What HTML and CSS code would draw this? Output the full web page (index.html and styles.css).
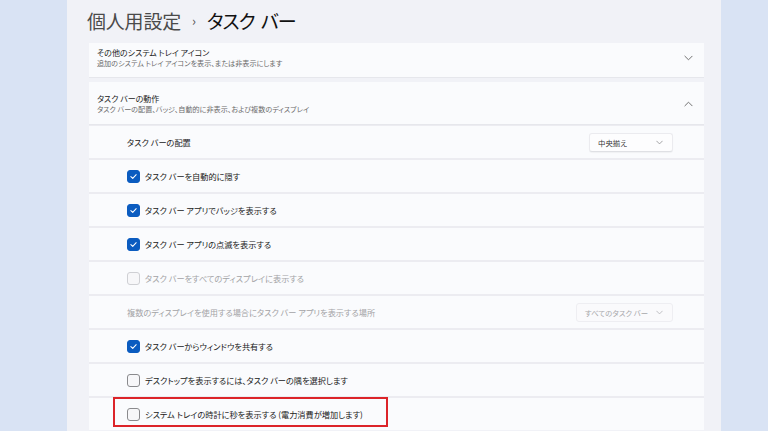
FILE: index.html
```html
<!DOCTYPE html>
<html lang="ja">
<head>
<meta charset="utf-8">
<title>タスク バー</title>
<link rel="stylesheet" href="styles.css">
</head>
<body>
<div class="screen">
  <div class="gutter left"></div>
  <main class="panel">
    <h1 class="title"><span class="crumb">個人用設定</span><span class="sep">›</span><span class="current">タスク バー</span></h1>

    <section class="card">
      <div class="card-head short">
        <div class="head-text">
          <div class="head-title">その他のシステム トレイ アイコン</div>
          <div class="head-sub">追加のシステム トレイ アイコンを表示、または非表示にします</div>
        </div>
        <svg class="chev" viewBox="0 0 10 6" width="9" height="6"><polyline points="1,1 5,5 9,1"/></svg>
      </div>
    </section>

    <section class="card open">
      <div class="card-head tall">
        <div class="head-text">
          <div class="head-title">タスク バーの動作</div>
          <div class="head-sub">タスク バーの配置、バッジ、自動的に非表示、および複数のディスプレイ</div>
        </div>
        <svg class="chev" viewBox="0 0 10 6" width="9" height="6"><polyline points="1,5 5,1 9,5"/></svg>
      </div>
      <div class="rows">
        <div class="row">
          <span class="label">タスク バーの配置</span>
          <div class="select"><span>中央揃え</span><svg class="chev small" viewBox="0 0 10 6" width="7" height="5"><polyline points="1,1 5,5 9,1"/></svg></div>
        </div>
        <div class="row">
          <span class="box checked"><svg viewBox="0 0 12 12" width="9" height="9"><polyline points="2.5,6.2 5,8.6 9.6,3.6"/></svg></span>
          <span class="label">タスク バーを自動的に隠す</span>
        </div>
        <div class="row">
          <span class="box checked"><svg viewBox="0 0 12 12" width="9" height="9"><polyline points="2.5,6.2 5,8.6 9.6,3.6"/></svg></span>
          <span class="label">タスク バー アプリでバッジを表示する</span>
        </div>
        <div class="row">
          <span class="box checked"><svg viewBox="0 0 12 12" width="9" height="9"><polyline points="2.5,6.2 5,8.6 9.6,3.6"/></svg></span>
          <span class="label">タスク バー アプリの点滅を表示する</span>
        </div>
        <div class="row">
          <span class="box disabled"></span>
          <span class="label disabled">タスク バーをすべてのディスプレイに表示する</span>
        </div>
        <div class="row">
          <span class="label disabled">複数のディスプレイを使用する場合にタスク バー アプリを表示する場所</span>
          <div class="select disabled wide"><span>すべてのタスク バー</span><svg class="chev small" viewBox="0 0 10 6" width="7" height="5"><polyline points="1,1 5,5 9,1"/></svg></div>
        </div>
        <div class="row">
          <span class="box checked"><svg viewBox="0 0 12 12" width="9" height="9"><polyline points="2.5,6.2 5,8.6 9.6,3.6"/></svg></span>
          <span class="label">タスク バーからウィンドウを共有する</span>
        </div>
        <div class="row">
          <span class="box"></span>
          <span class="label">デスクトップを表示するには、タスク バーの隅を選択します</span>
        </div>
        <div class="row marked">
          <span class="box"></span>
          <span class="label">システム トレイの時計に秒を表示する (電力消費が増加します)</span>
          <span class="highlight"></span>
        </div>
      </div>
    </section>
  </main>
  <div class="gutter right"></div>
</div>
</body>
</html>
```

FILE: styles.css
```css
html, body {
  margin: 0;
  padding: 0;
}
body {
  width: 768px;
  height: 431px;
  overflow: hidden;
  background: #d9e3f4;
  font-family: "Noto Sans CJK JP", "Noto Sans", sans-serif;
  font-feature-settings: "palt";
  color: #1f1f1f;
}
.screen {
  display: flex;
  height: 431px;
}
.gutter.left {
  width: 67px;
  flex: none;
}
.gutter.right {
  flex: 1;
}
.panel {
  width: 654px;
  flex: none;
  background: #f1f2f7;
  padding: 0 17px 0 22px;
  box-sizing: border-box;
  overflow: hidden;
}
.title {
  margin: 0 0 0 -2px;
  height: 43px;
  display: flex;
  align-items: center;
  gap: 9px;
  font-size: 19px;
  font-weight: 400;
  padding-bottom: 2px;
  box-sizing: border-box;
}
.title .crumb {
  color: #4a4a4a;
  letter-spacing: -0.2px;
}
.title .sep {
  font-size: 13px;
  color: #555;
  margin: 0 2px;
}
.title .current {
  color: #111;
  letter-spacing: -1px;
  word-spacing: 3px;
}
.card {
  background: #ececf1;
}
.card + .card {
  margin-top: 4px;
}
.card-head {
  background: #fafbfd;
  display: flex;
  align-items: center;
  justify-content: space-between;
  padding: 0 11px 0 8px;
  box-sizing: border-box;
  border-bottom: 1px solid #e6e7ec;
}
.card-head.short {
  height: 35px;
  padding-bottom: 5px;
}
.card-head.tall {
  height: 43px;
  padding-top: 1px;
}
.head-text {
  display: flex;
  flex-direction: column;
  gap: 0;
}
.head-title {
  font-size: 8px;
  line-height: 11px;
  color: #222;
}
.head-sub {
  font-size: 7.1px;
  line-height: 10px;
  color: #6a6a6a;
}
.chev {
  fill: none;
  stroke: #707070;
  stroke-width: 1.1;
  stroke-linecap: round;
  stroke-linejoin: round;
}
.rows {
  display: flex;
  flex-direction: column;
  gap: 2px;
  padding-top: 1px;
}
.row {
  position: relative;
  height: 32px;
  background: #fafbfd;
  display: flex;
  align-items: center;
  padding: 0 31px 0 38px;
  box-sizing: border-box;
}
.label {
  font-size: 8.2px;
  color: #202020;
  flex: 1;
  white-space: nowrap;
}
.label.disabled {
  color: #a3a3a6;
}
.box {
  width: 13px;
  height: 13px;
  flex: none;
  box-sizing: border-box;
  border: 1px solid #8a8a8d;
  border-radius: 3px;
  background: #f7f7f9;
  margin-right: 5px;
  display: flex;
  align-items: center;
  justify-content: center;
}
.box.checked {
  background: #0b5cc0;
  border-color: #0b5cc0;
}
.box.checked svg {
  fill: none;
  stroke: #fff;
  stroke-width: 1.4;
  stroke-linecap: round;
  stroke-linejoin: round;
}
.box.disabled {
  border-color: #cfd0d4;
  background: #f7f7f9;
}
.select {
  width: 84px;
  height: 19px;
  box-sizing: border-box;
  background: #fdfdfe;
  border: 1px solid #ebebef;
  border-bottom-color: #dfe0e4;
  border-radius: 3px;
  display: flex;
  align-items: center;
  justify-content: space-between;
  padding: 0 9px 0 8px;
  font-size: 7.4px;
  color: #333;
  box-shadow: 0 1px 1px rgba(0, 0, 0, 0.04);
}
.select.wide {
  width: 97px;
}
.select.disabled {
  color: #a8a8ab;
  background: #fafafc;
  box-shadow: none;
  border-color: #eeeef2;
}
.select.disabled .chev {
  stroke: #b0b0b3;
}
.chev.small {
  stroke: #8a8a8d;
}
.highlight {
  position: absolute;
  left: 24px;
  top: -1px;
  width: 275px;
  height: 30px;
  box-sizing: border-box;
  border: 2px solid #dc2429;
  pointer-events: none;
}
```
